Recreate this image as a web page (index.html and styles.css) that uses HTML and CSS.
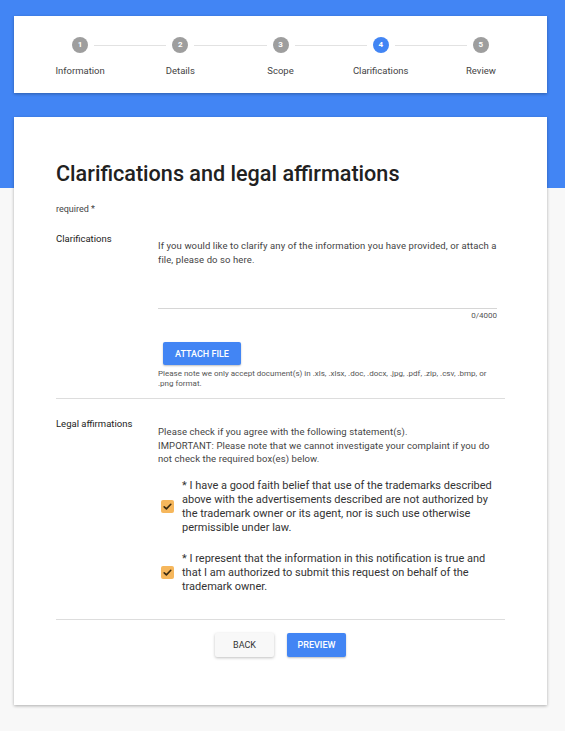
FILE: index.html
```html
<!DOCTYPE html>
<html lang="en">
<head>
  <meta charset="UTF-8">
  <title>Clarifications and legal affirmations</title>
  <link rel="stylesheet" href="styles.css">
</head>
<body>
  <div class="top-band"></div>
  <div class="page">
    <div class="stepper-card">
      <div class="step done"><span class="step-num">1</span><span class="step-label">Information</span></div>
      <div class="step done"><span class="step-num">2</span><span class="step-label">Details</span></div>
      <div class="step done"><span class="step-num">3</span><span class="step-label">Scope</span></div>
      <div class="step active"><span class="step-num">4</span><span class="step-label">Clarifications</span></div>
      <div class="step"><span class="step-num">5</span><span class="step-label">Review</span></div>
    </div>

    <div class="form-card">
      <h1 class="form-title">Clarifications and legal affirmations</h1>
      <div class="required-note">required *</div>

      <div class="form-row">
        <div class="row-label">Clarifications</div>
        <div class="row-body">
          <div class="textarea">If you would like to clarify any of the information you have provided, or attach a file, please do so here.</div>
          <div class="counter">0/4000</div>
          <button class="btn btn-primary attach-btn">ATTACH FILE</button>
          <div class="file-note">Please note we only accept document(s) in .xls, .xlsx, .doc, .docx, .jpg, .pdf, .zip, .csv, .bmp, or .png format.</div>
        </div>
      </div>

      <hr class="divider">

      <div class="form-row legal-row">
        <div class="row-label">Legal affirmations</div>
        <div class="row-body">
          <p class="legal-intro">Please check if you agree with the following statement(s).<br>IMPORTANT: Please note that we cannot investigate your complaint if you do not check the required box(es) below.</p>
          <label class="check-item first">
            <span class="checkbox"><svg viewBox="0 0 13 13" width="13" height="13"><path d="M3.2 6.8l2.2 2.1 4.4-4.6" fill="none" stroke="#3a2a10" stroke-width="1.6" stroke-linecap="round" stroke-linejoin="round"/></svg></span>
            <span class="check-text">* I have a good faith belief that use of the trademarks described above with the advertisements described are not authorized by the trademark owner or its agent, nor is such use otherwise permissible under law.</span>
          </label>
          <label class="check-item second">
            <span class="checkbox"><svg viewBox="0 0 13 13" width="13" height="13"><path d="M3.2 6.8l2.2 2.1 4.4-4.6" fill="none" stroke="#3a2a10" stroke-width="1.6" stroke-linecap="round" stroke-linejoin="round"/></svg></span>
            <span class="check-text">* I represent that the information in this notification is true and that I am authorized to submit this request on behalf of the trademark owner.</span>
          </label>
        </div>
      </div>

      <hr class="divider bottom">

      <div class="actions">
        <button class="btn btn-plain">BACK</button>
        <button class="btn btn-primary">PREVIEW</button>
      </div>
    </div>
  </div>
</body>
</html>
```

FILE: styles.css
```css
html, body {
  margin: 0;
  padding: 0;
}
body {
  font-family: Roboto, "Liberation Sans", Arial, sans-serif;
  background: #f8f8f8;
  color: #333;
  position: relative;
}
.top-band {
  position: absolute;
  left: 0;
  top: 0;
  width: 100%;
  height: 188px;
  background: #4285f4;
}
.page {
  position: relative;
  padding: 16px 18px 26px 14px;
}

/* stepper */
.stepper-card {
  background: #fff;
  height: 77px;
  box-sizing: border-box;
  padding: 21px 16px 0;
  display: flex;
  box-shadow: 0 1px 3px rgba(0,0,0,0.3);
}
.step {
  flex: 1;
  display: flex;
  flex-direction: column;
  align-items: center;
  position: relative;
}
.step:not(:last-child)::after {
  content: "";
  position: absolute;
  top: 8px;
  left: calc(50% + 14px);
  right: calc(-50% + 14px);
  height: 1px;
  background: #e2e2e2;
}
.step-num {
  width: 16px;
  height: 16px;
  border-radius: 50%;
  background: #9e9e9e;
  color: #fff;
  font-size: 8px;
  font-weight: 700;
  line-height: 16px;
  text-align: center;
}
.step.active .step-num {
  background: #4285f4;
}
.step-label {
  margin-top: 12px;
  font-size: 9.5px;
  line-height: 12px;
  color: #444;
}

/* form card */
.form-card {
  margin-top: 24px;
  background: #fff;
  box-shadow: 0 1px 3px rgba(0,0,0,0.3);
  padding: 43px 42px 48px;
}
.form-title {
  margin: 0;
  font-size: 21.6px;
  line-height: 28px;
  font-weight: 500;
  color: #212121;
}
.required-note {
  margin-top: 15px;
  font-size: 9px;
  line-height: 12px;
  color: #444;
}
.form-row {
  display: flex;
  margin-top: 18px;
}
.row-label {
  width: 102px;
  flex: none;
  font-size: 9.5px;
  line-height: 12px;
  color: #222;
}
.row-body {
  width: 339px;
  padding-top: 6px;
}
.textarea {
  height: 69px;
  border-bottom: 1px solid #d6d6d6;
  font-size: 9.5px;
  line-height: 14px;
  color: #444;
  letter-spacing: 0.1px;
}
.counter {
  margin-top: 2px;
  text-align: right;
  font-size: 8px;
  line-height: 10px;
  color: #555;
}
.btn {
  font-family: inherit;
  border: none;
  border-radius: 2px;
  height: 24px;
  cursor: pointer;
  font-size: 9px;
  font-weight: 500;
}
.btn-primary {
  background: #4285f4;
  color: #fff;
  box-shadow: 0 1px 2px rgba(0,0,0,0.25);
}
.btn-plain {
  background: #f8f8f8;
  color: #333;
  box-shadow: 0 1px 3px rgba(0,0,0,0.25);
  font-weight: 400;
}
.attach-btn {
  margin: 21px 0 0 5px;
  width: 78px;
  height: 23px;
  display: block;
}
.file-note {
  margin-top: 4px;
  font-size: 8px;
  line-height: 9.5px;
  color: #555;
}
.divider {
  border: none;
  border-top: 1px solid #ddd;
  margin: 10px 0 0;
}
.legal-row {
  margin-top: 19px;
}
.legal-row .row-body {
  padding-top: 0;
}
.legal-intro {
  margin: 0;
  padding-top: 7px;
  font-size: 9.5px;
  line-height: 13.5px;
  color: #444;
  letter-spacing: 0.1px;
}
.check-item {
  display: flex;
  align-items: center;
  gap: 8px;
  margin-left: 3px;
  width: 336px;
}
.check-item.first {
  margin-top: 13px;
}
.check-item.second {
  margin-top: 17px;
}
.checkbox {
  flex: none;
  width: 13px;
  height: 13px;
  border-radius: 2px;
  background: #f6b75c;
  display: flex;
}
.check-text {
  font-size: 11px;
  line-height: 14px;
  color: #333;
}
.divider.bottom {
  margin-top: 25px;
}
.actions {
  display: flex;
  justify-content: center;
  gap: 13px;
  margin-top: 13px;
}
.actions .btn {
  width: 59px;
}
```
